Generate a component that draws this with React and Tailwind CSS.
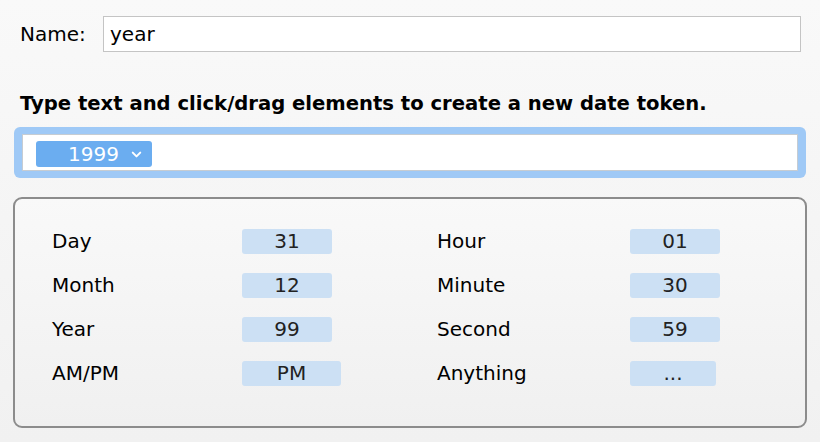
import { ChevronDown } from 'lucide-react';

const ELEMENTOS = [
    ['Day', '31', 'Hour', '01'],
    ['Month', '12', 'Minute', '30'],
    ['Year', '99', 'Second', '59'],
    ['AM/PM', 'PM', 'Anything', '...'],
];

const Chip = ({ texto, ancho }) => (
    <div className={`${ancho} h-[25px] rounded-[3px] bg-[#cce0f4] flex items-center justify-center text-[#222] leading-none`}>
        {texto}
    </div>
);

const App = () => {
    return (
        <div className="w-[820px] h-[442px] overflow-hidden bg-gradient-to-b from-[#f9f9f9] to-[#f1f1f1] text-[20px] text-black font-['DejaVu_Sans',sans-serif]">
            {/* Nombre */}
            <div className="flex items-center pt-[16px] pl-[20px] pr-[19px]">
                <span className="w-[83px]">Name:</span>
                <div className="flex-1 h-[36px] bg-white border border-[#c4c4c4] flex items-center pl-[6px]">
                    year
                </div>
            </div>

            <p className="mt-[42px] ml-[20px] font-bold text-[19.6px] leading-none">
                Type text and click/drag elements to create a new date token.
            </p>

            {/* Campo del token con anillo de foco */}
            <div className="mt-[13px] mx-[14px] h-[51px] rounded-[6px] bg-[#9fc9f6] p-[7px] px-[8px]">
                <div className="h-full bg-white border border-[#c6ccd2] flex items-start pt-[6px] pl-[13px]">
                    <div className="h-[26px] w-[116px] rounded-[3px] bg-[#6badf0] text-white flex items-center pl-[32px] leading-none">
                        <span>1999</span>
                        <ChevronDown size={15} strokeWidth={3.2} className="ml-[10px] mt-[1px]" />
                    </div>
                </div>
            </div>

            {/* Elementos disponibles */}
            <div className="mt-[19px] mx-[13px] h-[231px] rounded-[9px] border-2 border-[#8c8c8c] bg-gradient-to-b from-[#f9f9f9] to-[#f0f0f0] pt-[30px] pl-[37px]">
                <div className="grid grid-cols-[190px_195px_193px_auto] gap-y-[19px] items-center">
                    {ELEMENTOS.map(([l1, v1, l2, v2]) => (
                        <div key={l1} className="contents">
                            <span className="leading-none">{l1}</span>
                            <Chip texto={v1} ancho={v1 === 'PM' ? 'w-[99px]' : 'w-[90px]'} />
                            <span className="leading-none">{l2}</span>
                            <Chip texto={v2} ancho={v2 === '...' ? 'w-[86px]' : 'w-[90px]'} />
                        </div>
                    ))}
                </div>
            </div>
        </div>
    );
};

export default App;
